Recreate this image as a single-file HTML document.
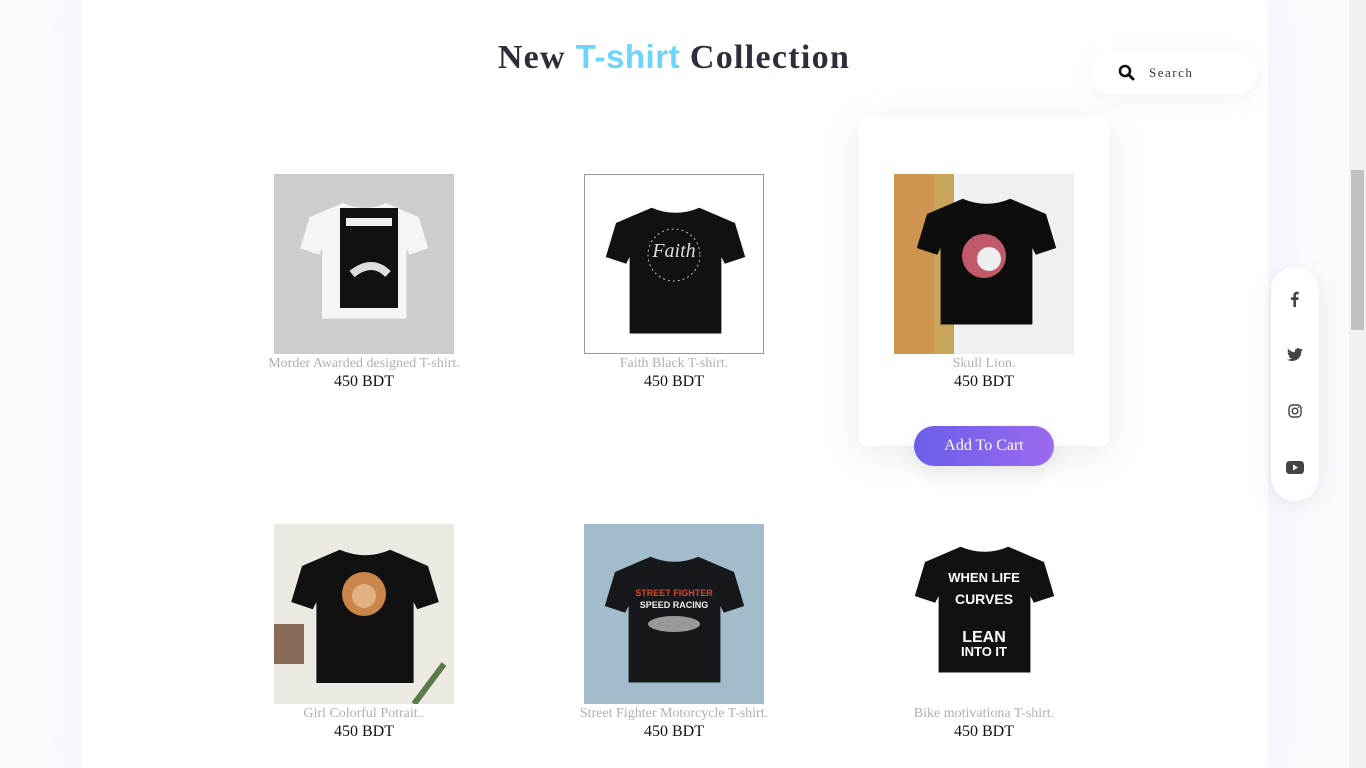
<!DOCTYPE html>
<html><head><meta charset="utf-8"><style>
*{margin:0;padding:0;box-sizing:border-box}
body{width:1366px;height:768px;overflow:hidden;background:#fafaff;font-family:"Liberation Serif",serif;position:relative}
.wrap{position:absolute;left:82px;top:0;width:1186px;height:768px;background:#fff;box-shadow:0 0 40px rgba(120,110,255,.06)}
h1{position:absolute;left:0;width:1348px;top:38px;text-align:center;font-size:34px;font-weight:bold;color:#2c2f3a;letter-spacing:1.3px}
h1 span{color:#6dd5fa;font-family:"Liberation Sans",sans-serif;letter-spacing:0.5px;font-size:33px}
.search{position:absolute;left:1090px;top:51px;width:168px;height:43px;background:#fff;border-radius:22px;box-shadow:0 5px 25px rgba(0,0,0,.06)}
.search span{position:absolute;left:59px;top:14px;font-size:13px;letter-spacing:1.5px;color:#333}
.card{position:absolute;left:859px;top:116px;width:250px;height:330px;background:#fff;border-radius:8px;box-shadow:0 8px 40px rgba(0,0,0,.09)}
.p{position:absolute;width:310px;text-align:center}
.img{width:180px;height:180px;margin:0 auto;position:relative;overflow:hidden}
.n{font-size:14px;color:#b0b0b0;margin-top:1px;line-height:18px}
.pr{font-size:16px;color:#111;line-height:18px}
.btn{position:absolute;left:914px;top:426px;width:140px;height:40px;border-radius:20px;background:linear-gradient(90deg,#6a5ee8,#9c6af0);color:#fff;font-size:16px;text-align:center;line-height:40px;box-shadow:0 8px 20px rgba(0,0,0,.08)}
.soc{position:absolute;left:1271px;top:267px;width:48px;height:234px;background:#fff;border-radius:24px;box-shadow:0 5px 25px rgba(0,0,0,.08)}
.sb{position:absolute;left:1349px;top:0;width:17px;height:768px;background:#f1f1f1}
.th{position:absolute;left:1351px;top:170px;width:13px;height:160px;background:#c1c1c1}
</style></head><body>
<div class="wrap"></div>
<h1>New <span>T-shirt</span> Collection</h1>
<div class="search"><svg style="position:absolute;left:28px;top:13px" width="17" height="17" viewBox="0 0 17 17"><circle cx="7" cy="7" r="5" fill="none" stroke="#111" stroke-width="2.6"/><path d="M10.5 10.5L15 15" stroke="#111" stroke-width="3" stroke-linecap="round"/></svg><span>Search</span></div>
<div class="card"></div>
<svg width="0" height="0" style="position:absolute"><defs><path id="sh" d="M62 22 Q90 34 118 22 L160 40 L172 80 L148 88 L144 80 L144 170 L36 170 L36 80 L32 88 L8 80 L20 40 Z"/></defs></svg>

<div class="p" style="left:209px;top:174px"><div class="img" style="background:#cdcdcd"><svg width="180" height="180"><g transform="translate(20,12) scale(0.78)"><use href="#sh" fill="#f5f5f5"/></g><rect x="66" y="34" width="58" height="100" fill="#111"/><rect x="72" y="44" width="46" height="8" fill="#eee"/><path d="M78 100q20-16 36 0" stroke="#ddd" stroke-width="8" fill="none"/></svg></div><div class="n">Morder Awarded designed T-shirt.</div><div class="pr">450 BDT</div></div>

<div class="p" style="left:519px;top:174px"><div class="img" style="border:1px solid #999;background:#fff"><svg width="178" height="178"><g transform="translate(14,14) scale(0.85)"><use href="#sh" fill="#111"/></g><text x="89" y="82" fill="#ddd" font-size="20" text-anchor="middle" font-style="italic" font-family="Liberation Serif">Faith</text><circle cx="89" cy="80" r="26" fill="none" stroke="#bbb" stroke-dasharray="2 3"/></svg></div><div class="n">Faith Black T-shirt.</div><div class="pr">450 BDT</div></div>

<div class="p" style="left:829px;top:174px"><div class="img" style="background:#f0f0f0"><svg width="180" height="180"><rect width="60" height="180" fill="#c9a55a"/><rect x="0" y="0" width="40" height="180" fill="#d38a4a" opacity=".6"/><g transform="translate(16,6) scale(0.85)"><use href="#sh" fill="#0d0d0d"/></g><circle cx="90" cy="82" r="22" fill="#c05a6a"/><circle cx="95" cy="85" r="12" fill="#eee"/></svg></div><div class="n">Skull Lion.</div><div class="pr">450 BDT</div></div>

<div class="p" style="left:209px;top:524px"><div class="img" style="background:#ece8e2"><svg width="180" height="180"><rect x="0" y="100" width="30" height="40" fill="#8a6b5a"/><g transform="translate(10,6) scale(0.9)"><use href="#sh" fill="#111"/></g><circle cx="90" cy="70" r="22" fill="#c8864a"/><circle cx="90" cy="72" r="12" fill="#e0b080"/><path d="M140 180l30-40" stroke="#5a7a4a" stroke-width="6"/></svg></div><div class="n">Girl Colorful Potrait..</div><div class="pr">450 BDT</div></div>

<div class="p" style="left:519px;top:524px"><div class="img" style="background:#a3bccb"><svg width="180" height="180"><g transform="translate(14,14) scale(0.85)"><use href="#sh" fill="#16181c"/></g><text x="90" y="72" fill="#d24a2a" font-size="9" text-anchor="middle" font-family="Liberation Sans" font-weight="bold">STREET FIGHTER</text><text x="90" y="84" fill="#eee" font-size="9" text-anchor="middle" font-family="Liberation Sans" font-weight="bold">SPEED RACING</text><ellipse cx="90" cy="100" rx="26" ry="8" fill="#999"/></svg></div><div class="n">Street Fighter Motorcycle T-shirt.</div><div class="pr">450 BDT</div></div>

<div class="p" style="left:829px;top:524px"><div class="img" style="background:#fff"><svg width="180" height="180"><g transform="translate(14,4) scale(0.85)"><use href="#sh" fill="#111"/></g><g font-family="Liberation Sans" font-weight="bold" fill="#fff" text-anchor="middle"><text x="90" y="58" font-size="13">WHEN LIFE</text><text x="90" y="80" font-size="14">CURVES</text><text x="90" y="118" font-size="16">LEAN</text><text x="90" y="132" font-size="13">INTO IT</text></g></svg></div><div class="n">Bike motivationa T-shirt.</div><div class="pr">450 BDT</div></div>

<div class="btn">Add To Cart</div>
<div class="soc">
<svg style="position:absolute;left:16px;top:24px" width="16" height="16" viewBox="0 0 16 16"><path d="M9 16V9h2.3l.4-2.7H9V4.6c0-.8.3-1.3 1.3-1.3h1.4V.9C11.4.8 10.6.7 9.8.7 7.7.7 6.4 2 6.4 4.2v2.1H4V9h2.4v7z" fill="#444"/></svg>
<svg style="position:absolute;left:16px;top:81px" width="16" height="14" viewBox="0 0 16 14"><path d="M16 1.7a6.6 6.6 0 0 1-1.9.5A3.3 3.3 0 0 0 15.6.4a6.6 6.6 0 0 1-2.1.8A3.3 3.3 0 0 0 7.9 4.2 9.3 9.3 0 0 1 1.1.7a3.3 3.3 0 0 0 1 4.4A3.3 3.3 0 0 1 .6 4.700a3.3 3.3 0 0 0 2.6 3.2 3.3 3.3 0 0 1-1.5.1 3.3 3.3 0 0 0 3.1 2.3A6.6 6.6 0 0 1 0 11.6 9.3 9.3 0 0 0 5 13c6 0 9.4-5 9.4-9.4v-.4A6.7 6.7 0 0 0 16 1.7z" fill="#444"/></svg>
<svg style="position:absolute;left:17px;top:137px" width="14" height="14" viewBox="0 0 14 14"><rect x="1" y="1" width="12" height="12" rx="3.5" fill="none" stroke="#444" stroke-width="1.4"/><circle cx="7" cy="7" r="2.8" fill="none" stroke="#444" stroke-width="1.4"/><circle cx="10.5" cy="3.5" r=".8" fill="#444"/></svg>
<svg style="position:absolute;left:15px;top:194px" width="18" height="13" viewBox="0 0 18 13"><rect x="0" y="0" width="18" height="13" rx="3.5" fill="#444"/><path d="M7 3.5v6l5-3z" fill="#fff"/></svg>
</div>
<div class="sb"></div><div class="th"></div>
</body></html>
